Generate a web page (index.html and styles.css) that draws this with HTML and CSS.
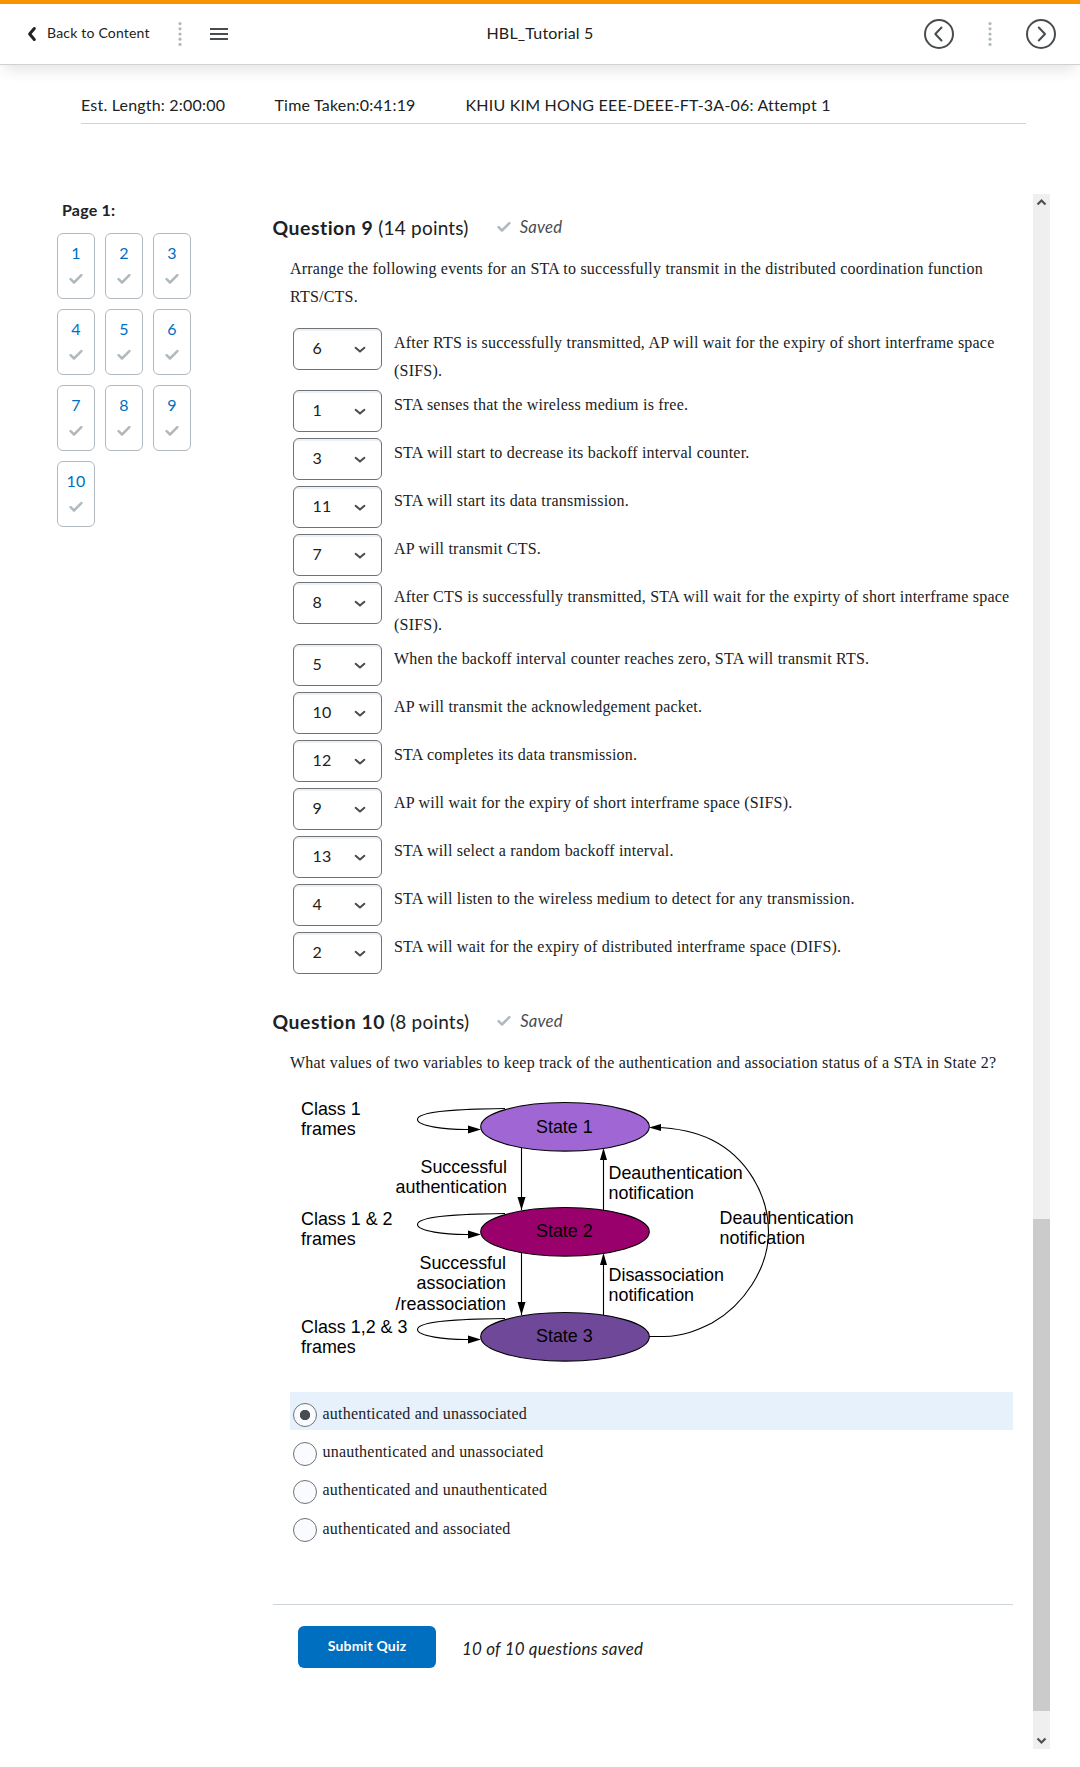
FILE: index.html
```html
<!DOCTYPE html>
<html lang="en">
<head>
<meta charset="utf-8">
<title>HBL_Tutorial 5</title>
<link rel="stylesheet" href="styles.css">
</head>
<body>
<svg class="defs" width="0" height="0">
  <symbol id="check" viewBox="0 0 14 12"><path d="M1.6 6.2 5 9.5 12.4 2.1" fill="none" stroke="currentColor" stroke-width="2.5" stroke-linecap="round" stroke-linejoin="round"/></symbol>
  <symbol id="chev" viewBox="0 0 12 8"><path d="M1.6 1.8 6 5.6 10.4 1.8" fill="none" stroke="currentColor" stroke-width="2" stroke-linecap="round" stroke-linejoin="round"/></symbol>
  <symbol id="dots" viewBox="0 0 4 26"><g fill="#b1b9be"><circle cx="2" cy="2.6" r="1.6"/><circle cx="2" cy="7.8" r="1.6"/><circle cx="2" cy="13" r="1.6"/><circle cx="2" cy="18.2" r="1.6"/><circle cx="2" cy="23.4" r="1.6"/></g></symbol>
</svg>
<header class="topbar">
  <div class="nav-left">
    <svg class="back-icon" viewBox="0 0 10 16"><path d="M7.3 2.500 2.6 8l4.700 5.500" fill="none" stroke="#202122" stroke-width="3" stroke-linejoin="round" stroke-linecap="round"/></svg>
    <a class="back">Back to Content</a>
    <svg class="dots"><use href="#dots"/></svg>
    <svg class="menu-icon" viewBox="0 0 18 12"><path d="M0 1h18M0 6h18M0 11h18" stroke="#494c4e" stroke-width="2"/></svg>
  </div>
  <h1 class="title">HBL_Tutorial 5</h1>
  <div class="nav-right">
    <svg class="round" viewBox="0 0 30 30"><circle cx="15" cy="15" r="14"/><path d="M17.500 8.500 11.300 15l6.200 6.500"/></svg>
    <svg class="dots"><use href="#dots"/></svg>
    <svg class="round" viewBox="0 0 30 30"><circle cx="15" cy="15" r="14"/><path d="M12.800 8.500 19 15l-6.200 6.500"/></svg>
  </div>
</header>
<div class="info"><span class="est">Est. Length: 2:00:00</span><span class="taken">Time Taken:0:41:19</span><span>KHIU KIM HONG EEE-DEEE-FT-3A-06: Attempt 1</span></div>
<div class="content">
  <aside class="pages">
    <h2 class="page-label">Page 1:</h2>
    <div class="cards">
      <a class="card">1<svg class="check"><use href="#check"/></svg></a>
      <a class="card">2<svg class="check"><use href="#check"/></svg></a>
      <a class="card">3<svg class="check"><use href="#check"/></svg></a>
      <a class="card">4<svg class="check"><use href="#check"/></svg></a>
      <a class="card">5<svg class="check"><use href="#check"/></svg></a>
      <a class="card">6<svg class="check"><use href="#check"/></svg></a>
      <a class="card">7<svg class="check"><use href="#check"/></svg></a>
      <a class="card">8<svg class="check"><use href="#check"/></svg></a>
      <a class="card">9<svg class="check"><use href="#check"/></svg></a>
      <a class="card">10<svg class="check"><use href="#check"/></svg></a>
    </div>
  </aside>
  <main class="quiz">
    <div class="q-head"><h2 class="q-title"><b>Question 9</b> (14 points)</h2><svg class="check"><use href="#check"/></svg><em class="saved">Saved</em></div>
    <p class="prompt">Arrange the following events for an STA to successfully transmit in the distributed coordination function RTS/CTS.</p>
    <div class="rows">
      <div class="row tall"><div class="select">6<svg class="chev"><use href="#chev"/></svg></div><p>After RTS is successfully transmitted, AP will wait for the expiry of short interframe space (SIFS).</p></div>
      <div class="row"><div class="select">1<svg class="chev"><use href="#chev"/></svg></div><p>STA senses that the wireless medium is free.</p></div>
      <div class="row"><div class="select">3<svg class="chev"><use href="#chev"/></svg></div><p>STA will start to decrease its backoff interval counter.</p></div>
      <div class="row"><div class="select">11<svg class="chev"><use href="#chev"/></svg></div><p>STA will start its data transmission.</p></div>
      <div class="row"><div class="select">7<svg class="chev"><use href="#chev"/></svg></div><p>AP will transmit CTS.</p></div>
      <div class="row tall"><div class="select">8<svg class="chev"><use href="#chev"/></svg></div><p>After CTS is successfully transmitted, STA will wait for the expirty of short interframe space (SIFS).</p></div>
      <div class="row"><div class="select">5<svg class="chev"><use href="#chev"/></svg></div><p>When the backoff interval counter reaches zero, STA will transmit RTS.</p></div>
      <div class="row"><div class="select">10<svg class="chev"><use href="#chev"/></svg></div><p>AP will transmit the acknowledgement packet.</p></div>
      <div class="row"><div class="select">12<svg class="chev"><use href="#chev"/></svg></div><p>STA completes its data transmission.</p></div>
      <div class="row"><div class="select">9<svg class="chev"><use href="#chev"/></svg></div><p>AP will wait for the expiry of short interframe space (SIFS).</p></div>
      <div class="row"><div class="select">13<svg class="chev"><use href="#chev"/></svg></div><p>STA will select a random backoff interval.</p></div>
      <div class="row"><div class="select">4<svg class="chev"><use href="#chev"/></svg></div><p>STA will listen to the wireless medium to detect for any transmission.</p></div>
      <div class="row"><div class="select">2<svg class="chev"><use href="#chev"/></svg></div><p>STA will wait for the expiry of distributed interframe space (DIFS).</p></div>
    </div>
    <div class="q-head second"><h2 class="q-title"><b>Question 10</b> (8 points)</h2><svg class="check"><use href="#check"/></svg><em class="saved">Saved</em></div>
    <p class="prompt">What values of two variables to keep track of the authentication and association status of a STA in State 2?</p>
    <svg class="diagram" viewBox="290 1090 580 285">
      <g class="line">
        <ellipse cx="565" cy="1126.8" rx="84.3" ry="24.3" fill="#a066d3"/>
        <ellipse cx="565" cy="1231.8" rx="84.3" ry="24.3" fill="#99006b"/>
        <ellipse cx="565" cy="1336.8" rx="84.3" ry="24.3" fill="#6f4899"/>
        <path fill="none" d="M505 1108.5C460 1109 417.500 1111 417.500 1119.500C417.500 1126 445 1130 470 1129.500"/>
        <path fill="none" d="M505 1213.500C460 1214 417.500 1216 417.500 1224.500C417.500 1231 445 1235 470 1234.500"/>
        <path fill="none" d="M505 1318.500C460 1319 417.500 1321 417.500 1329.500C417.500 1336 445 1340 470 1339.500"/>
        <path fill="none" d="M521.500 1148V1210M521.500 1253V1315M603.500 1210V1150M603.500 1315V1255"/>
        <path fill="none" d="M649 1336.500H664C684 1336 698 1330 712 1323C744 1305 768.500 1268 768.500 1232C768.500 1194 746 1157 712 1140C694 1131 676 1128 655 1127.500"/>
      </g>
      <path d="M481 1129.500 468 1125.500V1133.500ZM481 1234.500 468 1230.500V1238.500ZM481 1339.500 468 1335.500V1343.500ZM521.500 1210 517.500 1197H525.500ZM521.500 1315 517.500 1302H525.500ZM603.500 1148 600 1160H607ZM603.500 1253 600 1265H607ZM649 1127.500 661 1124V1131Z"/>
      <g class="lbl">
        <text x="301" y="1115">Class 1</text><text x="301" y="1135">frames</text>
        <text x="301" y="1225">Class 1 &amp; 2</text><text x="301" y="1245">frames</text>
        <text x="301" y="1333">Class 1,2 &amp; 3</text><text x="301" y="1353">frames</text>
        <text x="536" y="1133">State 1</text><text x="536" y="1237">State 2</text><text x="536" y="1342">State 3</text>
        <g text-anchor="end"><text x="507" y="1173">Successful</text><text x="507" y="1193">authentication</text>
        <text x="506" y="1269">Successful</text><text x="506" y="1289">association</text><text x="506" y="1310">/reassociation</text></g>
        <text x="608.500" y="1179">Deauthentication</text><text x="608.500" y="1199">notification</text>
        <text x="608.500" y="1281">Disassociation</text><text x="608.500" y="1301">notification</text>
        <text x="719.500" y="1224">Deauthentication</text><text x="719.500" y="1244">notification</text>
      </g>
    </svg>
    <div class="options">
      <label class="option chosen"><span class="radio"></span><span class="answer">authenticated and unassociated</span></label>
      <label class="option"><span class="radio"></span><span class="answer">unauthenticated and unassociated</span></label>
      <label class="option"><span class="radio"></span><span class="answer">authenticated and unauthenticated</span></label>
      <label class="option"><span class="radio"></span><span class="answer">authenticated and associated</span></label>
    </div>
    <div class="submit-row"><button class="submit">Submit Quiz</button><em class="count">10 of 10 questions saved</em></div>
  </main>
  <div class="scroll">
    <svg class="arrow" viewBox="0 0 17 17"><path d="M4.500 10.500 8.500 6.500 12.500 10.500"/></svg>
    <div class="thumb"></div>
    <svg class="arrow" viewBox="0 0 17 17"><path d="M4.500 6.500 8.500 10.500 12.500 6.500"/></svg>
  </div>
</div>
</body>
</html>
```
FILE: styles.css
```css
* { box-sizing: border-box; }
body { margin: 0; height: 1767px; overflow: hidden; background: #fff; color: #202122; font-family: Lato, sans-serif; font-size: 16px; letter-spacing: 0.2px; }
h1, h2, p { margin: 0; font-weight: 400; }
.defs { position: absolute; }
.topbar { height: 65px; border-top: 4px solid #f79400; border-bottom: 1px solid #cfd1d3; display: grid; grid-template-columns: 1fr auto 1fr; align-items: center; padding: 0 24px 0 27px; box-shadow: 0 8px 14px -4px rgba(0,0,0,.12); }
.nav-left, .nav-right { display: flex; align-items: center; }
.nav-right { justify-content: flex-end; }
.back-icon { width: 10px; height: 16px; margin-right: 10px; }
.back { font-size: 14px; padding-bottom: 3px; }
.dots { width: 4px; height: 26px; }
.nav-left .dots { margin-left: 28px; }
.menu-icon { width: 18px; height: 12px; margin-left: 28px; }
.title { font-size: 16px; padding: 0 3px 4px 0; }
.round { width: 30px; height: 30px; fill: none; stroke: #494c4e; stroke-width: 2; stroke-linecap: round; stroke-linejoin: round; }
.nav-right .dots { margin: 0 34px; }
.info { margin: 26px 54px 0 81px; height: 33px; padding-top: 4px; display: flex; border-bottom: 1px solid #cdd5dc; }
.est { width: 193.500px; }
.taken { width: 191px; }
.content { display: flex; margin: 70px 30px 0 57px; height: 1555px; }
.pages { width: 215.500px; padding-top: 6px; }
.page-label { font-size: 16px; line-height: 20px; font-weight: 700; padding-left: 5px; }
.cards { display: grid; grid-template-columns: repeat(3, 38px); gap: 10px; margin-top: 13px; }
.card { height: 66px; border: 1px solid #b1b9be; border-radius: 6px; color: #006fbf; display: flex; flex-direction: column; align-items: center; line-height: 20px; padding-top: 9px; }
.check { width: 14px; height: 12px; color: #b1b9be; }
.card .check { margin-top: 10px; }
.quiz { width: 740.500px; padding-top: 20px; }
.q-head { display: flex; align-items: center; height: 26px; }
.q-head.second { margin-top: 28px; }
.q-title { font-size: 19px; }
.q-title b { font-size: 19.400px; letter-spacing: 0.520px; }
.q-head .check { margin-left: 28px; }
.saved { margin-left: 9px; padding-bottom: 0.500px; font-size: 16.700px; color: #494c4e; }
.prompt, .row p, .option { font-family: "Liberation Serif", serif; font-size: 16px; letter-spacing: 0.212px; line-height: 27.500px; }
.prompt { padding-left: 17.500px; margin-top: 15px; }
.rows { padding: 18px 0 0 20.500px; }
.row { display: flex; height: 48px; }
.row.tall { height: 62px; }
.row p { margin: 1px 0 0 12px; }
.select { flex: none; width: 89px; height: 42px; border: 1px solid #6e7376; border-radius: 6px; display: flex; align-items: center; justify-content: space-between; padding: 0 15.500px 4px 18.500px; box-shadow: inset 0 2px 0 #eef0f4; }
.chev { width: 12px; height: 8px; color: #494c4e; margin-top: 6px; }
.diagram { display: block; width: 580px; height: 285px; margin: 13px 0 0 17.500px; }
.line { stroke: #000; stroke-width: 1.1; }
.lbl { font-family: "Liberation Sans", sans-serif; font-size: 17.900px; letter-spacing: 0; fill: #000; }
.options { margin: 17px 0 0 17.500px; }
.option { display: flex; height: 38.300px; padding-left: 3px; }
.chosen { height: 38px; background: #e6f1fc; }
.answer { margin-top: 8.500px; }
.radio { width: 24px; height: 24px; border: 1px solid #6e7376; border-radius: 50%; background: #f9fbff; margin: 12px 5.500px 0 0; }
.chosen .radio { margin-top: 11px; background: radial-gradient(circle, #494c4e 4.800px, #f9fbff 5.500px); }
.submit-row { border-top: 1px solid #cdd5dc; margin-top: 59.600px; padding: 21px 0 0 25.500px; display: flex; align-items: center; }
.submit { width: 138px; height: 42px; border: 0; border-radius: 6px; background: #006fbf; color: #fff; font: 700 14px Lato, sans-serif; letter-spacing: 0.2px; padding: 0 0 3px; }
.count { margin-left: 26px; padding-top: 3px; font-size: 16.950px; }
.scroll { width: 17px; margin-left: 20px; background: #efefef; display: flex; flex-direction: column; }
.thumb { height: 492px; background: #cbcbcb; margin-top: auto; margin-bottom: 21px; }
.arrow { width: 17px; height: 17px; fill: none; stroke: #505050; stroke-width: 2.200; }
```
